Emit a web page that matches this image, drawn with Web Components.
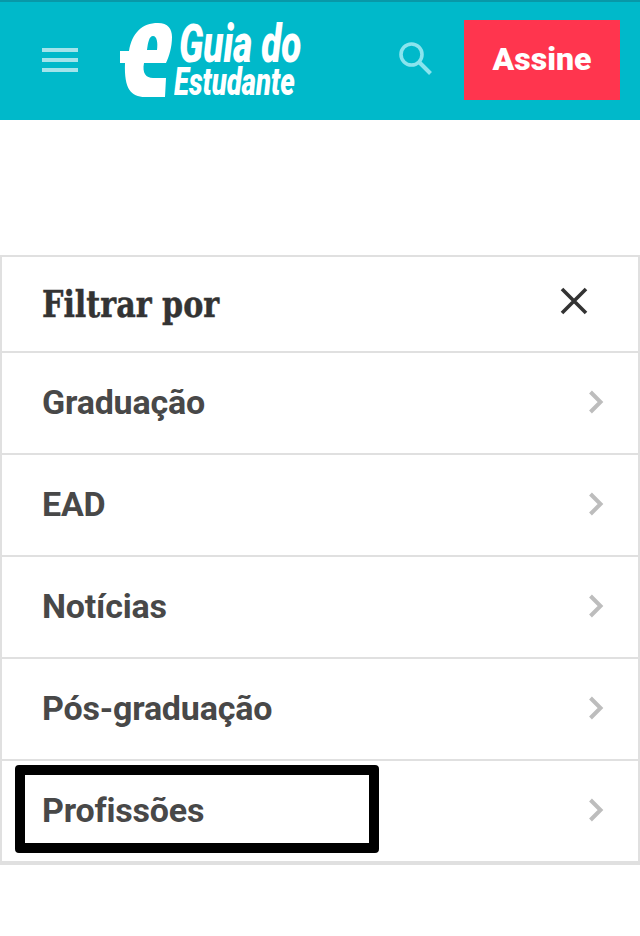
<!DOCTYPE html>
<html lang="pt">
<head>
<meta charset="utf-8">
<title>Guia do Estudante</title>
<style>
  html, body { margin: 0; background: #fff; }
  body { width: 640px; height: 936px; overflow: hidden; font-family: Roboto, "Liberation Sans", sans-serif; }
</style>
</head>
<body>
<site-header></site-header>
<filter-panel title="Filtrar por">
  <filter-row>Graduação</filter-row>
  <filter-row>EAD</filter-row>
  <filter-row>Notícias</filter-row>
  <filter-row>Pós-graduação</filter-row>
  <filter-row marked>Profissões</filter-row>
</filter-panel>
<script>
// top bar with menu button, logo, search and subscribe button
class SiteHeader extends HTMLElement {
  constructor() {
    super();
    this.attachShadow({ mode: "open" });
    this.shadowRoot.innerHTML = `
      <style>
        :host {
          display: flex;
          align-items: center;
          box-sizing: border-box;
          height: 120px;
          background: #00b9ca;
          border-top: 2px solid #0898a8;
          padding: 18px 20px 20px 42px;
        }
        .menu { width: 36px; height: 24px; display: flex; flex-direction: column; justify-content: space-between; }
        .menu span { display: block; height: 4px; background: #a3e3ea; }
        .logo { display: flex; align-items: flex-start; margin-left: 42px; width: 186px; height: 78px; color: #fff; }
        .logo svg { flex: none; display: block; margin-top: 2px; }
        .words {
          flex: none;
          width: 130px;
          margin-left: 2px;
          font: italic 900 39.3px/31px Roboto, "Liberation Sans", sans-serif;
          white-space: pre;
          text-indent: 7px;
          transform: scaleX(.7);
          transform-origin: 0 0;
        }
        .words::first-line { font-size: 52.6px; line-height: 46px; }
        .search { margin-left: auto; margin-right: 31px; margin-top: -4px; display: block; }
        .assine {
          width: 156px; height: 80px; display: flex; align-items: center; justify-content: center;
          background: #ff354e; color: #fff; padding-bottom: 3px; box-sizing: border-box;
          font: 900 32px Roboto, "Liberation Sans", sans-serif;
        }
      </style>
      <div class="menu"><span></span><span></span><span></span></div>
      <div class="logo">
        <svg width="52" height="76" viewBox="0 0 52 76" aria-hidden="true">
          <path fill="#fff" fill-rule="evenodd" d="M0 28 L9 28 C12 10 22 0 38 0 C48 0 52 6 52 14 C52 24 49 34 46 40 L24 40 C22 50 26 55 33 55 L46 55 L45 74 L25 74 C11 74 4 66 5 40 L0 40 Z M27 27 L37 27 C38 20 37 13 33 13 C29 13 28 20 27 27 Z"/>
        </svg>
        <div class="words">Guia do
Estudante</div>
      </div>
      <svg class="search" width="36" height="36" viewBox="0 0 36 36" fill="none" stroke="#8ae4ee" aria-hidden="true">
        <circle cx="14.5" cy="14.5" r="10.5" stroke-width="3.6"/>
        <path d="M22.5 22.5 L33.5 33.5" stroke-width="4"/>
      </svg>
      <div class="assine">Assine</div>
    `;
  }
}

// bordered list with a title and a close button
class FilterPanel extends HTMLElement {
  constructor() {
    super();
    this.attachShadow({ mode: "open" });
    this.shadowRoot.innerHTML = `
      <style>
        :host {
          display: block;
          box-sizing: border-box;
          margin-top: 135px;
          height: 610px;
          border: 2px solid #e0e0e0;
          border-bottom-width: 4px;
          background: #fff;
        }
        header {
          display: flex;
          align-items: center;
          justify-content: space-between;
          box-sizing: border-box;
          height: 96px;
          padding: 0 50px 6px 40px;
          border-bottom: 2px solid #e0e0e0;
        }
        h2 {
          margin: 0;
          padding-top: 6px;
          color: #333;
          font: 700 37px/44px "DejaVu Serif", "Liberation Serif", serif;
          -webkit-text-stroke: .5px #333;
          transform: scaleX(.815);
          transform-origin: 0 50%;
          white-space: nowrap;
        }
        svg { display: block; }
      </style>
      <header>
        <h2></h2>
        <svg width="28" height="28" viewBox="0 0 28 28" stroke="#333" stroke-width="3.6" aria-hidden="true">
          <path d="M2 2 L26 26 M26 2 L2 26"/>
        </svg>
      </header>
      <slot></slot>
    `;
    this.shadowRoot.querySelector("h2").textContent = this.getAttribute("title");
    this.removeAttribute("title");
  }
}

// one filter entry, "marked" puts the black highlight box round it
class FilterRow extends HTMLElement {
  constructor() {
    super();
    this.attachShadow({ mode: "open" });
    this.shadowRoot.innerHTML = `
      <style>
        :host {
          display: flex;
          align-items: center;
          justify-content: space-between;
          position: relative;
          box-sizing: border-box;
          height: 102px;
          padding: 0 34px 2px 40px;
          border-bottom: 2px solid #e0e0e0;
          color: #484848;
          font: 700 34px/40px Roboto, "Liberation Sans", sans-serif;
          letter-spacing: -.2px;
        }
        :host(:last-child) { height: 100px; border-bottom: 0; }
        .mark {
          display: none;
          position: absolute;
          left: 13px; top: 4px;
          width: 344px; height: 68px;
          border: 10px solid #000;
          border-radius: 4px;
        }
        :host([marked]) .mark { display: block; }
        svg { display: block; }
      </style>
      <slot></slot>
      <svg width="16" height="24" viewBox="0 0 16 24" fill="none" stroke="#bdbdbd" stroke-width="4" aria-hidden="true">
        <path d="M2.5 2 L12.5 12 L2.5 22"/>
      </svg>
      <div class="mark"></div>
    `;
  }
}

customElements.define("site-header", SiteHeader);
customElements.define("filter-panel", FilterPanel);
customElements.define("filter-row", FilterRow);
</script>
</body>
</html>
